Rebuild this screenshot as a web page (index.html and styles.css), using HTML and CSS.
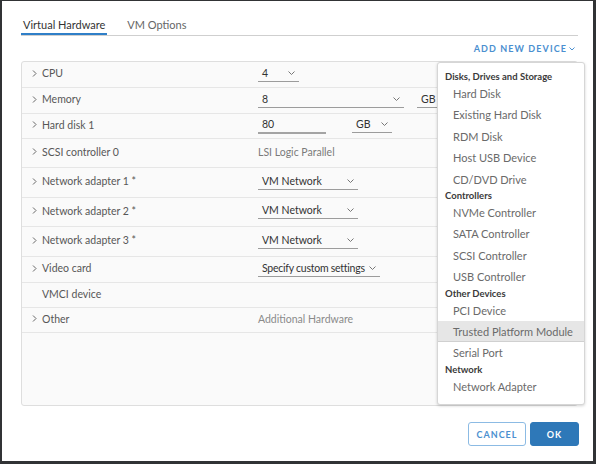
FILE: index.html
```html
<!DOCTYPE html>
<html>
<head>
<meta charset="utf-8">
<link rel="stylesheet" href="styles.css">
</head>
<body>
<div class="dialog">
  <div class="tabs">
    <div class="tab active">Virtual Hardware</div>
    <div class="tab">VM Options</div>
  </div>
  <div class="toolbar">
    <span class="add-btn">ADD NEW DEVICE<svg class="dd" width="6" height="4" viewBox="0 0 6 4"><polyline points="0.5,0.5 3,3 5.5,0.5" fill="none" stroke="#4a8fd0" stroke-width="1"/></svg></span>
  </div>
  <div class="hw">
    <div class="row h26">
      <span class="caret"><svg width="5" height="7" viewBox="0 0 5 7"><polyline points="1,0.5 4,3.5 1,6.5" fill="none" stroke="#666" stroke-width="1"/></svg></span>
      <span class="label">CPU</span>
      <div class="val"><span class="select w41">4<svg width="7" height="4" viewBox="0 0 7 4"><polyline points="0.5,0.5 3.5,3.5 6.5,0.5" fill="none" stroke="#777" stroke-width="1"/></svg></span></div>
    </div>
    <div class="row h26">
      <span class="caret"><svg width="5" height="7" viewBox="0 0 5 7"><polyline points="1,0.5 4,3.5 1,6.5" fill="none" stroke="#666" stroke-width="1"/></svg></span>
      <span class="label">Memory</span>
      <div class="val"><span class="select w146">8<svg width="7" height="4" viewBox="0 0 7 4"><polyline points="0.5,0.5 3.5,3.5 6.5,0.5" fill="none" stroke="#777" stroke-width="1"/></svg></span><span class="select w40 gap13">GB<svg width="7" height="4" viewBox="0 0 7 4"><polyline points="0.5,0.5 3.5,3.5 6.5,0.5" fill="none" stroke="#777" stroke-width="1"/></svg></span></div>
    </div>
    <div class="row h25">
      <span class="caret"><svg width="5" height="7" viewBox="0 0 5 7"><polyline points="1,0.5 4,3.5 1,6.5" fill="none" stroke="#666" stroke-width="1"/></svg></span>
      <span class="label">Hard disk 1</span>
      <div class="val"><span class="select w68 thick">80</span><span class="select w40 gap26">GB<svg width="7" height="4" viewBox="0 0 7 4"><polyline points="0.5,0.5 3.5,3.5 6.5,0.5" fill="none" stroke="#777" stroke-width="1"/></svg></span></div>
    </div>
    <div class="row h29">
      <span class="caret"><svg width="5" height="7" viewBox="0 0 5 7"><polyline points="1,0.5 4,3.5 1,6.5" fill="none" stroke="#666" stroke-width="1"/></svg></span>
      <span class="label">SCSI controller 0</span>
      <div class="val"><span class="plain">LSI Logic Parallel</span></div>
    </div>
    <div class="row h30">
      <span class="caret"><svg width="5" height="7" viewBox="0 0 5 7"><polyline points="1,0.5 4,3.5 1,6.5" fill="none" stroke="#666" stroke-width="1"/></svg></span>
      <span class="label">Network adapter 1 *</span>
      <div class="val"><span class="select w100">VM Network<svg width="7" height="4" viewBox="0 0 7 4"><polyline points="0.5,0.5 3.5,3.5 6.5,0.5" fill="none" stroke="#777" stroke-width="1"/></svg></span></div>
    </div>
    <div class="row h29">
      <span class="caret"><svg width="5" height="7" viewBox="0 0 5 7"><polyline points="1,0.5 4,3.5 1,6.5" fill="none" stroke="#666" stroke-width="1"/></svg></span>
      <span class="label">Network adapter 2 *</span>
      <div class="val"><span class="select w100">VM Network<svg width="7" height="4" viewBox="0 0 7 4"><polyline points="0.5,0.5 3.5,3.5 6.5,0.5" fill="none" stroke="#777" stroke-width="1"/></svg></span></div>
    </div>
    <div class="row h30">
      <span class="caret"><svg width="5" height="7" viewBox="0 0 5 7"><polyline points="1,0.5 4,3.5 1,6.5" fill="none" stroke="#666" stroke-width="1"/></svg></span>
      <span class="label">Network adapter 3 *</span>
      <div class="val"><span class="select w100">VM Network<svg width="7" height="4" viewBox="0 0 7 4"><polyline points="0.5,0.5 3.5,3.5 6.5,0.5" fill="none" stroke="#777" stroke-width="1"/></svg></span></div>
    </div>
    <div class="row h26">
      <span class="caret"><svg width="5" height="7" viewBox="0 0 5 7"><polyline points="1,0.5 4,3.5 1,6.5" fill="none" stroke="#666" stroke-width="1"/></svg></span>
      <span class="label">Video card</span>
      <div class="val"><span class="select w122">Specify custom settings<svg width="7" height="4" viewBox="0 0 7 4"><polyline points="0.5,0.5 3.5,3.5 6.5,0.5" fill="none" stroke="#777" stroke-width="1"/></svg></span></div>
    </div>
    <div class="row h25">
      <span class="caret"></span>
      <span class="label">VMCI device</span>
      <div class="val"></div>
    </div>
    <div class="row h25">
      <span class="caret"><svg width="5" height="7" viewBox="0 0 5 7"><polyline points="1,0.5 4,3.5 1,6.5" fill="none" stroke="#666" stroke-width="1"/></svg></span>
      <span class="label">Other</span>
      <div class="val"><span class="plain light">Additional Hardware</span></div>
    </div>

    <div class="menu">
      <div class="menu-h">Disks, Drives and Storage</div>
      <div class="menu-i">Hard Disk</div>
      <div class="menu-i">Existing Hard Disk</div>
      <div class="menu-i">RDM Disk</div>
      <div class="menu-i">Host USB Device</div>
      <div class="menu-i">CD/DVD Drive</div>
      <div class="menu-h">Controllers</div>
      <div class="menu-i">NVMe Controller</div>
      <div class="menu-i">SATA Controller</div>
      <div class="menu-i">SCSI Controller</div>
      <div class="menu-i">USB Controller</div>
      <div class="menu-h">Other Devices</div>
      <div class="menu-i">PCI Device</div>
      <div class="menu-i hl">Trusted Platform Module</div>
      <div class="menu-i">Serial Port</div>
      <div class="menu-h">Network</div>
      <div class="menu-i">Network Adapter</div>
    </div>
  </div>
  <div class="footer">
    <button class="btn outline">CANCEL</button>
    <button class="btn primary">OK</button>
  </div>
</div>
</body>
</html>
```

FILE: styles.css
```css
* { box-sizing: border-box; }
html, body { margin: 0; padding: 0; background: #fff; }
body { font-family: Lato, "Open Sans", sans-serif; color: #565656; }

.dialog {
  width: 596px;
  height: 464px;
  background: #fff;
  border-style: solid;
  border-color: #313335;
  border-width: 1px 3px 3px 2px;
  padding: 0 15px 0 19px;
}

.tabs {
  display: flex;
  gap: 18px;
  padding-top: 1px;
  border-bottom: 1px solid #cfcfcf;
}
.tab {
  padding: 15px 2px 1px;
  line-height: 15px;
  font-size: 11px;
  color: #666;
  border-bottom: 2px solid transparent;
}
.tab.active { color: #333; border-bottom-color: #2f7fc8; }

.toolbar {
  height: 25px;
  display: flex;
  justify-content: flex-end;
  align-items: center;
  padding-right: 3px;
}
.add-btn {
  font-size: 9px;
  font-weight: 700;
  letter-spacing: 1.1px;
  color: #4a8fd0;
  display: inline-flex;
  align-items: center;
}
.add-btn .dd { margin-left: 2px; }

.hw {
  position: relative;
  height: 345px;
  background: #fafafa;
  border: 1px solid #dedede;
  border-radius: 3px;
}

.row {
  display: grid;
  grid-template-columns: 10px 216px 1fr;
  align-items: center;
  padding: 0 0 3px 10px;
  border-bottom: 1px solid #e6e6e6;
  font-size: 10.5px;
  white-space: nowrap;
}
.h25 { height: 25px; }
.h26 { height: 26px; }
.h29 { height: 29px; }
.h30 { height: 30px; }

.caret { display: flex; align-items: center; }
.caret svg { display: block; }
.label { color: #575757; }
.val { display: flex; align-items: center; }

.select {
  display: inline-flex;
  justify-content: space-between;
  align-items: center;
  height: 17px;
  padding: 0 4px 0 4px;
  border-bottom: 1px solid #9c9c9c;
  color: #333;
}
.select svg { display: block; flex: none; }
.select.thick { border-bottom: 2px solid #a4a4a4; height: 18px; }
.w41 { width: 41px; }
.w40 { width: 40px; }
.w68 { width: 68px; }
.w100 { width: 100px; }
.w122 { width: 122px; letter-spacing: -0.25px; }
.w146 { width: 146px; }
.gap13 { margin-left: 13px; }
.gap26 { margin-left: 26px; }

.plain { color: #7a7a7a; }
.plain.light { color: #8a8a8a; }

.menu {
  position: absolute;
  top: 0;
  right: -8px;
  bottom: 0;
  width: 148px;
  background: #fff;
  border: 1px solid #d6d6d6;
  border-radius: 3px;
  box-shadow: 0 1px 3px rgba(0,0,0,0.18);
  padding-top: 8px;
}
.menu-h {
  height: 12px;
  line-height: 12px;
  padding-left: 7px;
  font-size: 9.5px;
  font-weight: 700;
  color: #3a3a3a;
}
.menu-i {
  height: 21.4px;
  line-height: 21.4px;
  padding-left: 15px;
  font-size: 11px;
  color: #6a6a6a;
}
.menu-i.hl { background: #e6e6e6; border-bottom: 1px solid #d0d0d0; }

.footer {
  display: flex;
  justify-content: flex-end;
  gap: 4px;
  margin-top: 16px;
  margin-right: -1px;
}
.btn {
  height: 24px;
  border-radius: 3px;
  font-family: Lato, "Open Sans", sans-serif;
  font-size: 9px;
  font-weight: 700;
  letter-spacing: 1px;
  padding: 0;
  cursor: pointer;
}
.btn.outline {
  width: 58px;
  background: #fff;
  color: #4a8fd0;
  border: 1px solid #8cbbe4;
}
.btn.primary {
  width: 49px;
  background: #2e78b8;
  color: #fff;
  border: 1px solid #2e78b8;
}
```
